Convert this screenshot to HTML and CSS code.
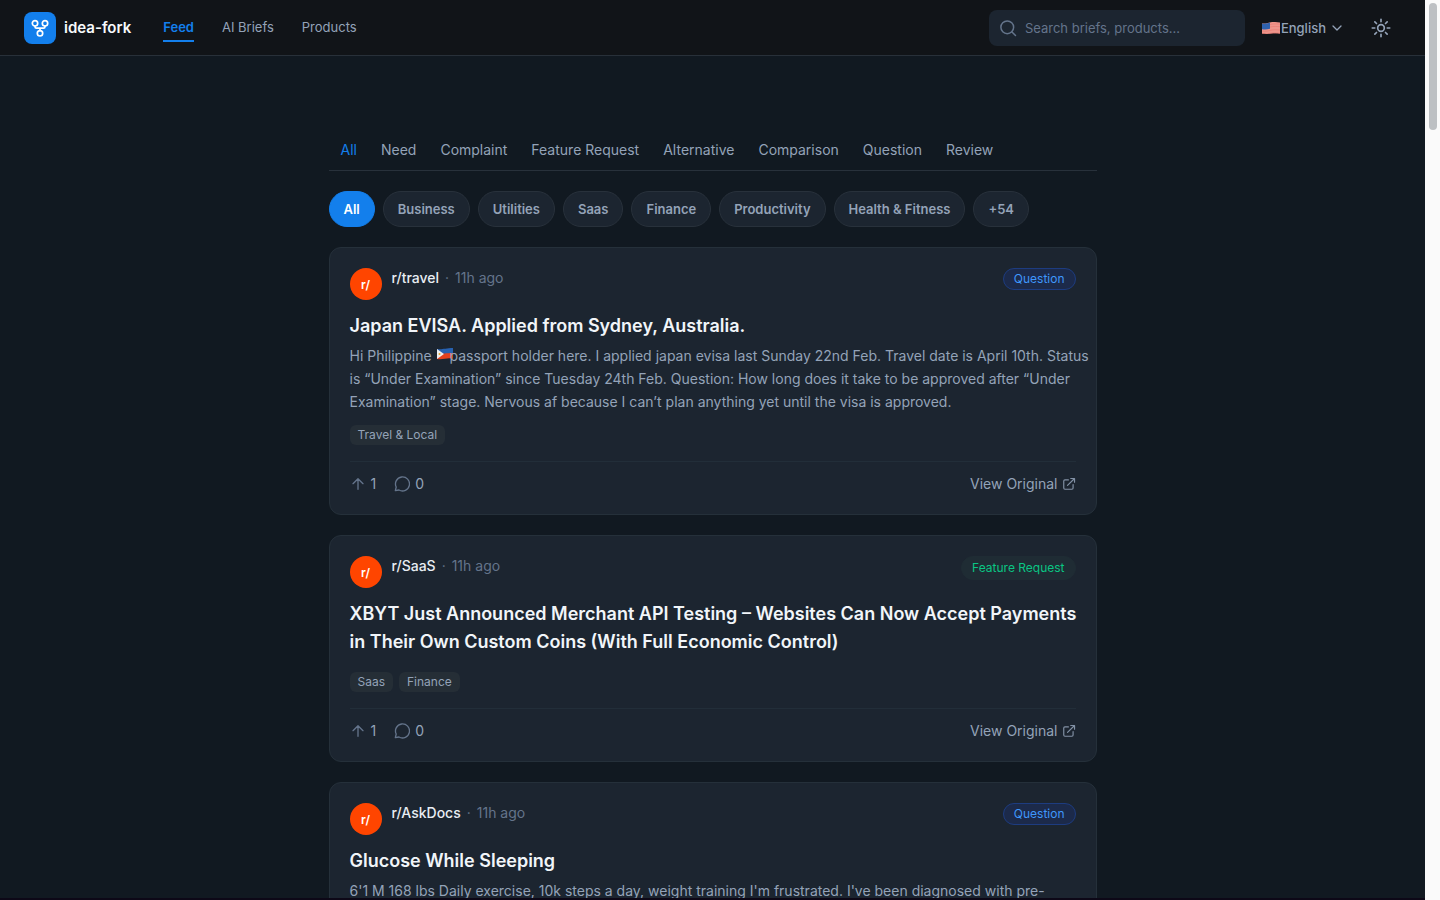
FILE: index.html
```html
<!DOCTYPE html>
<html lang="en">
<head>
<meta charset="utf-8">
<title>idea-fork</title>
<link rel="stylesheet" href="styles.css">
</head>
<body>
<svg class="defs" aria-hidden="true">
  <symbol id="up" viewBox="0 0 24 24"><path d="M12 20V4M4.500 11.500 12 4l7.500 7.500"/></symbol>
  <symbol id="chat" viewBox="0 0 24 24"><path d="M2 22l1.300-5.500A10.500 10.500 0 1 1 7.500 21z"/></symbol>
  <symbol id="external" viewBox="0 0 24 24"><path d="M11 5H5a2 2 0 0 0-2 2v12a2 2 0 0 0 2 2h12a2 2 0 0 0 2-2v-6M15 2.500h6.500V9M21 3 9.500 14.500"/></symbol>
</svg>
<div class="page">
  <header class="topbar">
    <a class="brand" href="#">
      <span class="brand-mark"><svg viewBox="0 0 32 32"><circle cx="11" cy="11.300" r="2.700"/><circle cx="21" cy="11.300" r="2.700"/><circle cx="16" cy="21.300" r="2.700"/><path d="M11 14v.700a1.500 1.500 0 0 0 1.500 1.500h7a1.500 1.500 0 0 0 1.500-1.500V14M16 16.200v2.400"/></svg></span>
      <span class="brand-name">idea-fork</span>
    </a>
    <nav class="mainnav">
      <a class="current" href="#">Feed</a>
      <a href="#">AI Briefs</a>
      <a href="#">Products</a>
    </nav>
    <div class="tools">
      <label class="search">
        <svg viewBox="0 0 24 24"><circle cx="11" cy="11" r="8.500"/><path d="m17.300 17.300 4.700 4.700"/></svg>
        <input type="search" placeholder="Search briefs, products..." aria-label="Search">
      </label>
      <button class="language" type="button">
        <svg class="flag" viewBox="0 0 18 12"><path d="M0 1.500C4 2 6 .500 10 0c3-.300 6 .500 8 .500v11c-4-.500-6-.500-9 0-3 .700-6 .500-9 0z" fill="#ee958b"/><path d="M8 2.500c4-1 7-.500 10-.300M8 5c4-1 7-.500 10-.300M0 9c4 1 7-.500 10-1s6 0 8 0M0 11.500c4 .700 6 .300 9-.300s6-.300 9 .300" fill="none" stroke="#e8776e" stroke-width=".600"/><path d="M0 1.500C3 2 6 1.300 8 .500v6.300c-3 .700-5 .700-8 .400z" fill="#2f62ae"/></svg>
        <span>English</span>
        <svg class="chevron" viewBox="0 0 12 12"><path d="m2 4 4 4 4-4"/></svg>
      </button>
      <button class="theme" type="button" aria-label="Toggle theme">
        <svg viewBox="0 0 24 24"><circle cx="12" cy="12" r="4"/><path d="M12 1.500v3M12 19.500v3M1.500 12h3M19.500 12h3M4.600 4.600l2 2M17.400 17.400l2 2M4.600 19.400l2-2M17.400 6.600l2-2"/></svg>
      </button>
    </div>
  </header>

  <main class="feed">
    <div class="tabs">
      <button class="selected" type="button">All</button>
      <button type="button">Need</button>
      <button type="button">Complaint</button>
      <button type="button">Feature Request</button>
      <button type="button">Alternative</button>
      <button type="button">Comparison</button>
      <button type="button">Question</button>
      <button type="button">Review</button>
    </div>
    <div class="chips">
      <button class="selected" type="button">All</button>
      <button type="button">Business</button>
      <button type="button">Utilities</button>
      <button type="button">Saas</button>
      <button type="button">Finance</button>
      <button type="button">Productivity</button>
      <button type="button">Health &amp; Fitness</button>
      <button type="button">+54</button>
    </div>

    <article class="card">
      <div class="meta">
        <span class="avatar">r/</span>
        <p class="source"><b>r/travel</b><span>·</span><time>11h ago</time></p>
        <span class="badge question">Question</span>
      </div>
      <h2>Japan EVISA. Applied from Sydney, Australia.</h2>
      <p class="excerpt">Hi Philippine <span class="inline-flag"><svg viewBox="0 0 18 14"><path d="M1 2c5 1 8-1 16-1v6H1z" fill="#2761b0"/><path d="M1 7c6 0 9-1 16-1v6c-5-2-9 1-16 0z" fill="#e3411e"/><path d="M1 2v10l7-5z" fill="#eee"/><circle cx="3.500" cy="7" r="1" fill="#e7a62b"/></svg></span>passport holder here. I applied japan evisa last Sunday 22nd Feb. Travel date is April 10th. Status<br>is “Under Examination” since Tuesday 24th Feb. Question: How long does it take to be approved after “Under<br>Examination” stage. Nervous af because I can’t plan anything yet until the visa is approved.</p>
      <div class="tags"><span>Travel &amp; Local</span></div>
      <footer class="actions">
        <button type="button" aria-label="Upvote"><svg><use href="#up"/></svg>1</button>
        <button type="button" aria-label="Comments"><svg><use href="#chat"/></svg>0</button>
        <a href="#">View Original<svg><use href="#external"/></svg></a>
      </footer>
    </article>

    <article class="card">
      <div class="meta">
        <span class="avatar">r/</span>
        <p class="source"><b>r/SaaS</b><span>·</span><time>11h ago</time></p>
        <span class="badge feature">Feature Request</span>
      </div>
      <h2>XBYT Just Announced Merchant API Testing – Websites Can Now Accept Payments<br>in Their Own Custom Coins (With Full Economic Control)</h2>
      <div class="tags"><span>Saas</span><span>Finance</span></div>
      <footer class="actions">
        <button type="button" aria-label="Upvote"><svg><use href="#up"/></svg>1</button>
        <button type="button" aria-label="Comments"><svg><use href="#chat"/></svg>0</button>
        <a href="#">View Original<svg><use href="#external"/></svg></a>
      </footer>
    </article>

    <article class="card">
      <div class="meta">
        <span class="avatar">r/</span>
        <p class="source"><b>r/AskDocs</b><span>·</span><time>11h ago</time></p>
        <span class="badge question">Question</span>
      </div>
      <h2>Glucose While Sleeping</h2>
      <p class="excerpt">6'1 M 168 lbs Daily exercise, 10k steps a day, weight training I'm frustrated. I've been diagnosed with pre-</p>
    </article>
  </main>
</div>
<div class="scrollbar"><div class="thumb"></div></div>
</body>
</html>
```
FILE: styles.css
```css
* { box-sizing: border-box; }

body {
  margin: 0;
  height: 100vh;
  display: flex;
  overflow: hidden;
  background: #111921;
  color: #94a3b8;
  font: 14px/20px Inter, sans-serif;
}

.defs { display: none; }
svg { display: block; flex: none; fill: none; stroke: currentColor; stroke-width: 2; stroke-linecap: round; stroke-linejoin: round; }
a { color: inherit; text-decoration: none; }
button { padding: 0; border: 0; background: none; color: inherit; font: inherit; cursor: pointer; }
h2, p { margin: 0; }

.page { flex: 1; min-width: 0; overflow: hidden; border-bottom: 2px solid #0d0817; }

.topbar {
  display: flex;
  align-items: center;
  height: 56px;
  padding: 0 34px 0 24px;
  background: #111418;
  border-bottom: 1px solid #283039;
}

.brand { display: flex; align-items: center; gap: 8px; }
.brand-mark { width: 32px; height: 32px; border-radius: 8px; background: #137fec; color: #fff; }
.brand-mark svg { width: 32px; height: 32px; stroke-width: 1.7; }
.brand-name { color: #f8fafc; font-size: 15px; font-weight: 600; }

.mainnav { display: flex; gap: 28px; margin-left: 32px; font-size: 13px; }
.mainnav a { padding: 4px 0 3px; border-bottom: 2px solid transparent; }
.mainnav .current { color: #137fec; border-color: #137fec; font-weight: 600; }

.tools { display: flex; align-items: center; margin-left: auto; }
.search {
  display: flex;
  align-items: center;
  gap: 8px;
  width: 256px;
  height: 36px;
  padding: 0 10px;
  border-radius: 8px;
  background: #1c2530;
  color: #64748b;
}
.search svg { width: 18px; height: 18px; }
.search input { flex: 1; min-width: 0; padding: 0; border: 0; outline: 0; background: none; color: #f1f5f9; font: 13px/20px Inter, sans-serif; }
.search input::placeholder { color: #64748b; }

.language { display: flex; align-items: center; margin-left: 17px; font-size: 13px; font-weight: 500; }
.flag { width: 18px; height: 12px; margin-right: 1px; stroke: none; }
.chevron { width: 12px; height: 12px; margin-left: 5px; stroke-width: 1.3; }
.theme { margin-left: 28px; }
.theme svg { width: 20px; height: 20px; }

.feed { max-width: 768px; margin: 0 auto; padding-top: 74px; }

.tabs { display: flex; border-bottom: 1px solid #28313b; }
.tabs button { padding: 10px 12px; }
.tabs .selected { color: #137fec; }

.chips { display: flex; gap: 8px; margin: 20px 0; font-size: 13px; font-weight: 600; }
.chips button { height: 36px; padding: 0 14px; border: 1px solid #28313b; border-radius: 18px; background: #1c2530; }
.chips .selected { background: #137fec; border-color: #137fec; color: #fff; }

.card { margin-bottom: 20px; padding: 20px; border: 1px solid #25303a; border-radius: 12px; background: #1c2530; }
.meta { display: flex; align-items: flex-start; gap: 10px; margin-bottom: 12px; }
.avatar { width: 32px; height: 32px; border-radius: 50%; background: #ff4500; color: #fff; font-size: 12px; font-weight: 600; line-height: 33px; text-align: center; }
.source { display: flex; gap: 6px; color: #64748b; }
.source b { color: #e8edf3; font-weight: 500; }
.badge { margin-left: auto; padding: 1px 10px; border: 1px solid; border-radius: 12px; font-size: 12px; line-height: 20px; }
.question { color: #3f97fb; background: #1c2a4a; border-color: #1d3c80; }
.feature { color: #0ac583; background: #1f2c34; border-color: #1f2c34; }
.badge.question { line-height: 18px; }

.card h2 { color: #f1f5f9; font-size: 18px; font-weight: 600; line-height: 28px; white-space: nowrap; }
.excerpt { margin-top: 4px; line-height: 23px; white-space: nowrap; }
.inline-flag { display: inline-block; width: 14px; }
.inline-flag svg { width: 18px; height: 14px; stroke: none; }

.tags { display: flex; gap: 6px; margin: 12px 0 16px; }
h2 + .tags { margin-top: 16px; }
.tags span { padding: 0 8px; border-radius: 6px; background: #252e36; font-size: 12px; }

.actions { display: flex; align-items: center; gap: 18px; padding-top: 12px; border-top: 1px solid #222e39; }
.actions button, .actions a { display: flex; align-items: center; gap: 5px; }
.actions svg { width: 16px; height: 16px; stroke-width: 2; color: #64748b; }
.actions a { margin-left: auto; gap: 4px; }
.actions a svg { width: 14px; height: 14px; color: #8291a5; }

.scrollbar { width: 15px; padding: 3px 3px 0 4px; background: #fafafa; }
.thumb { height: 127px; border-radius: 4px; background: #bdc0c3; }
```
